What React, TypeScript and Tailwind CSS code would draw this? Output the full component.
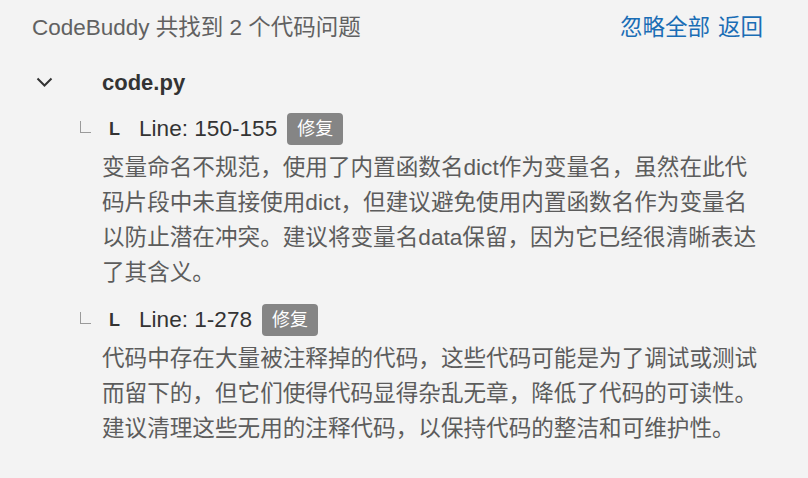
import React from "react";

type Issue = {
  lines: string;
  text: string;
};

const issues: Issue[] = [
  {
    lines: "150-155",
    text: "变量命名不规范，使用了内置函数名dict作为变量名，虽然在此代码片段中未直接使用dict，但建议避免使用内置函数名作为变量名以防止潜在冲突。建议将变量名data保留，因为它已经很清晰表达了其含义。",
  },
  {
    lines: "1-278",
    text: "代码中存在大量被注释掉的代码，这些代码可能是为了调试或测试而留下的，但它们使得代码显得杂乱无章，降低了代码的可读性。建议清理这些无用的注释代码，以保持代码的整洁和可维护性。",
  },
];

function IssueItem({ issue }: { issue: Issue }) {
  return (
    <div className="mb-[12px]">
      <div className="flex h-[36px] items-center">
        {/* 树形连接线 */}
        <div className="ml-[80px] mb-[4px] h-[12px] w-[11px] border-b-[1.5px] border-l-[1.5px] border-[#9a9a9a]" />
        <span className="ml-[18px] text-[18px] font-bold leading-none text-[#333]">L</span>
        <span className="ml-[19px] text-[22.6px] text-[#333]">Line: {issue.lines}</span>
        <span className="ml-[10px] flex h-[32px] items-center rounded-[4px] bg-[#858585] px-[10px] text-[18px] text-white">
          修复
        </span>
      </div>
      <p className="ml-[102px] mt-[3px] w-[666px] text-[22.6px] leading-[35px] text-[#5c5c5c]">{issue.text}</p>
    </div>
  );
}

export default function App() {
  return (
    <div
      className="h-[478px] w-[808px] overflow-hidden bg-[#f3f3f3]"
      style={{ fontFamily: '"Liberation Sans", "Noto Sans CJK SC", sans-serif' }}
    >
      <header className="flex items-center justify-between pl-[32px] pr-[45px] pt-[14px]">
        <span className="text-[22.5px] leading-[28px] text-[#616161]">CodeBuddy 共找到 2 个代码问题</span>
        <div className="flex gap-[8px] text-[22.5px] leading-[28px] text-[#1a6db5]">
          <span>忽略全部</span>
          <span>返回</span>
        </div>
      </header>

      <div className="mt-[25px] flex h-[30px] items-center">
        <svg className="ml-[36px]" width="17" height="11" viewBox="0 0 17 11" fill="none">
          <path d="M1.5 1.5 L8.5 8.5 L15.5 1.5" stroke="#333" strokeWidth="2" />
        </svg>
        <span className="ml-[49px] text-[22px] font-bold text-[#333]">code.py</span>
      </div>

      <div className="mt-[14px]">
        {issues.map((issue) => (
          <IssueItem key={issue.lines} issue={issue} />
        ))}
      </div>
    </div>
  );
}
